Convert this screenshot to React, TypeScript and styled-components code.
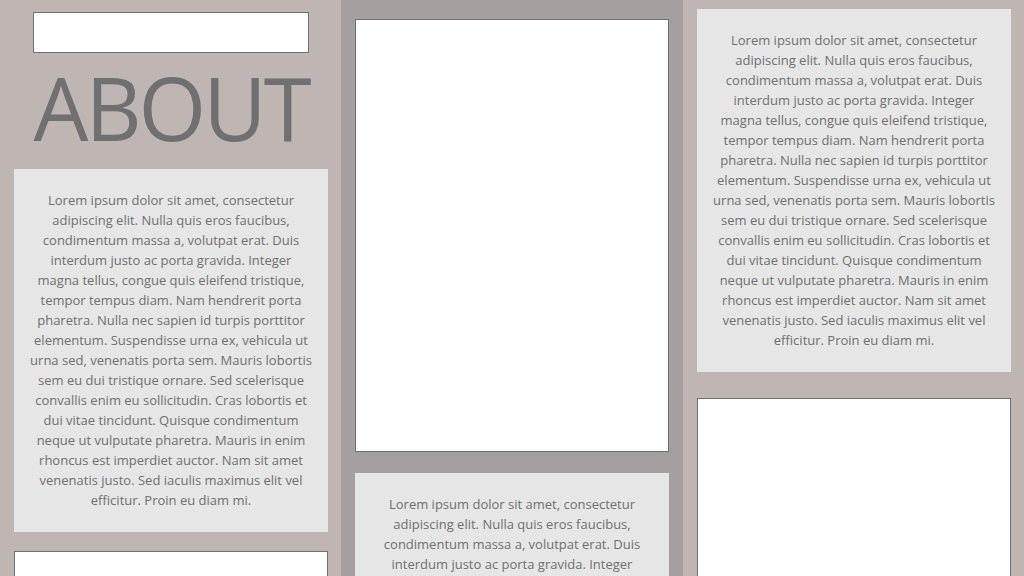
import React from "react";
import styled, { createGlobalStyle } from "styled-components";

const Global = createGlobalStyle`
  html, body { margin: 0; padding: 0; overflow: hidden; }
  body { font-family: "Open Sans", "Noto Sans", sans-serif; }
`;

const Page = styled.div`
  display: grid;
  grid-template-columns: 341px 342px 341px;
  height: 576px;
  overflow: hidden;
`;

const Column = styled.div<{ $tone: "light" | "dark" }>`
  background: ${(p) => (p.$tone === "dark" ? "#a59f9f" : "#bfb5b3")};
  display: flex;
  flex-direction: column;
  align-items: flex-start;
  padding: 0 14px;
  overflow: hidden;
`;

const SearchBox = styled.div`
  align-self: center;
  margin-top: 12px;
  width: 276px;
  height: 41px;
  box-sizing: border-box;
  background: #ffffff;
  border: 1px solid #707070;
  flex-shrink: 0;
`;

const Title = styled.h1`
  align-self: center;
  margin: 10px 0 0 1px;
  font-family: "Open Sans", sans-serif;
  font-weight: 400;
  font-size: 87px;
  line-height: 88px;
  color: #707070;
  letter-spacing: -3px;
`;

const TextCard = styled.div<{ $top: number }>`
  margin-top: ${(p) => p.$top}px;
  width: 314px;
  box-sizing: border-box;
  background: #e6e6e6;
  padding: 21px 16px 22px;
  flex-shrink: 0;
  color: #707070;
  font-family: "Open Sans", sans-serif;
  font-size: 13px;
  line-height: 20px;
  text-align: center;
`;

const ImageBox = styled.div<{ $top: number; $height: number }>`
  margin-top: ${(p) => p.$top}px;
  width: 314px;
  height: ${(p) => p.$height}px;
  box-sizing: border-box;
  background: #ffffff;
  border: 1px solid #707070;
  flex-shrink: 0;
`;

const LOREM =
  "Lorem ipsum dolor sit amet, consectetur adipiscing elit. Nulla quis eros faucibus, condimentum massa a, volutpat erat. Duis interdum justo ac porta gravida. Integer magna tellus, congue quis eleifend tristique, tempor tempus diam. Nam hendrerit porta pharetra. Nulla nec sapien id turpis porttitor elementum. Suspendisse urna ex, vehicula ut urna sed, venenatis porta sem. Mauris lobortis sem eu dui tristique ornare. Sed scelerisque convallis enim eu sollicitudin. Cras lobortis et dui vitae tincidunt. Quisque condimentum neque ut vulputate pharetra. Mauris in enim rhoncus est imperdiet auctor. Nam sit amet venenatis justo. Sed iaculis maximus elit vel efficitur. Proin eu diam mi.";

export default function App() {
  return (
    <>
      <Global />
      <Page>
        <Column $tone="light">
          <SearchBox />
          <Title>ABOUT</Title>
          <TextCard $top={18}>{LOREM}</TextCard>
          <ImageBox $top={19} $height={200} />
        </Column>
        <Column $tone="dark">
          <ImageBox $top={19} $height={433} />
          <TextCard $top={21}>{LOREM}</TextCard>
        </Column>
        <Column $tone="light">
          <TextCard $top={9}>{LOREM}</TextCard>
          <ImageBox $top={26} $height={300} />
        </Column>
      </Page>
    </>
  );
}
